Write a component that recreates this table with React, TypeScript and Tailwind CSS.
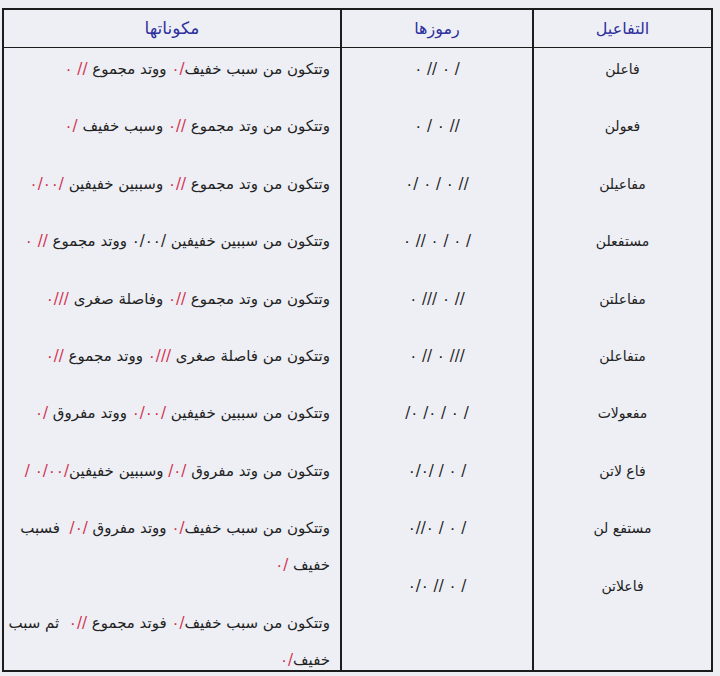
import type { ReactNode } from "react";

const R = ({ children }: { children: ReactNode }) => (
  <bdo dir="ltr" className="text-[#d3304d]">
    {children}
  </bdo>
);

const B = ({ children }: { children: ReactNode }) => <bdo dir="ltr">{children}</bdo>;

const feet = [
  "فاعلن",
  "فعولن",
  "مفاعيلن",
  "مستفعلن",
  "مفاعلتن",
  "متفاعلن",
  "مفعولات",
  "فاع لاتن",
  "مستفع لن",
  "فاعلاتن",
];

const symbols = [
  "٠ // ٠ /",
  "٠ / ٠ //",
  "٠/ ٠ / ٠ //",
  "٠ // ٠ / ٠ /",
  "٠ /// ٠ //",
  "٠ // ٠ ///",
  "/٠ /٠ / ٠ /",
  "٠/٠/ / ٠ /",
  "٠//٠ / ٠ /",
  "٠/٠ // ٠ /",
];

const parts: ReactNode[] = [
  <>
    وتتكون من سبب خفيف<R>٠/</R> ووتد مجموع <R>٠ //</R>
  </>,
  <>
    وتتكون من وتد مجموع <R>٠//</R> وسبب خفيف <R>٠/</R>
  </>,
  <>
    وتتكون من وتد مجموع <R>٠//</R> وسببين خفيفين <R>٠/٠٠/</R>
  </>,
  <>
    وتتكون من سببين خفيفين <B>٠/٠٠/</B> ووتد مجموع <R>٠ //</R>
  </>,
  <>
    وتتكون من وتد مجموع <R>٠//</R> وفاصلة صغرى <R>٠///</R>
  </>,
  <>
    وتتكون من فاصلة صغرى <R>٠///</R> ووتد مجموع <R>٠//</R>
  </>,
  <>
    وتتكون من سببين خفيفين <R>٠/٠٠/</R> ووتد مفروق <R>٠/</R>
  </>,
  <>
    وتتكون من وتد مفروق <R>/٠/</R> وسببين خفيفين<R>/ ٠/٠٠/</R>
  </>,
  <>
    وتتكون من سبب خفيف<R>٠/</R> ووتد مفروق <R>/٠/</R>{"\u00a0 "}فسبب
    <br />
    خفيف <R>٠/</R>
  </>,
  <>
    وتتكون من سبب خفيف<R>٠/</R> فوتد مجموع <R>٠//</R>{"\u00a0 "}ثم سبب
    <br />
    خفيف<R>٠/</R>
  </>,
];

export default function App() {
  return (
    <div
      className="w-[720px] h-[676px] bg-[#eceef4] pt-[8px] pl-[2px] pr-[7px] text-[#222]"
      style={{ fontFamily: '"DejaVu Sans", sans-serif' }}
    >
      <div
        dir="rtl"
        className="h-[664px] overflow-hidden border-2 border-[#1c1c1c] bg-[#edeff5] grid grid-cols-[179px_192px_1fr] grid-rows-[38px_minmax(0,1fr)]"
      >
        {/* header */}
        <div className="border-l-2 border-b border-[#1c1c1c] flex items-center justify-center text-[16px] text-[#2d2f9c]">
          التفاعيل
        </div>
        <div className="border-l-2 border-b border-[#1c1c1c] flex items-center justify-center text-[16px] text-[#2d2f9c]">
          رموزها
        </div>
        <div className="border-b border-[#1c1c1c] flex items-center justify-center text-[17px] text-[#2d2f9c]">
          مكوناتها
        </div>

        {/* body */}
        <div className="border-l-2 border-[#1c1c1c] flex flex-col items-center gap-[20.4px] pt-[3px] text-[14px]">
          {feet.map((f) => (
            <p key={f} className="leading-[37px]">
              {f}
            </p>
          ))}
        </div>
        <div className="border-l-2 border-[#1c1c1c] flex flex-col items-center gap-[20.4px] pt-[3px] text-[15px]">
          {symbols.map((s, i) => (
            <p key={i} className="leading-[37px]">
              <bdo dir="ltr" className="whitespace-pre">
                {s}
              </bdo>
            </p>
          ))}
        </div>
        <div className="flex flex-col gap-[20.4px] pt-[3px] pr-[10px] pl-[2px] text-[15px]">
          {parts.map((p, i) => (
            <p key={i} className="leading-[37px] whitespace-nowrap">
              {p}
            </p>
          ))}
        </div>
      </div>
    </div>
  );
}
